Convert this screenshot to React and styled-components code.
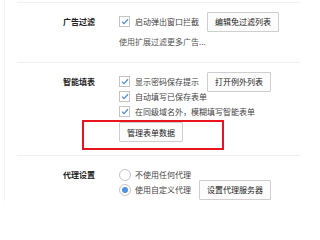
import React from 'react';
import styled, { createGlobalStyle } from 'styled-components';

const GlobalStyle = createGlobalStyle`
  html, body {
    margin: 0;
    padding: 0;
    background: #fff;
  }
  body {
    font-family: "Noto Sans CJK SC", "Noto Sans", sans-serif;
    font-size: 8px;
    color: #444;
  }
`;

const Page = styled.div`
  width: 296px;
  height: 201px;
  margin-left: 4px;
  border-left: 1px solid #f4f4f4;
  overflow: hidden;
  padding-top: 2px;
  box-sizing: border-box;
`;

const Section = styled.section`
  display: grid;
  grid-template-columns: 102px 1fr;
  margin-left: 12px;
  padding: 11px 0 ${props => props.$last ? 0 : 13}px;
  border-top: 1px solid #f1f1f1;
`;

const Label = styled.div`
  text-align: right;
  padding-right: 24px;
  line-height: 15px;
  font-weight: bold;
  color: #222;
`;

const Options = styled.div`
  display: flex;
  flex-direction: column;
`;

const Row = styled.div`
  display: flex;
  align-items: center;
  height: 15px;
  white-space: nowrap;
`;

const Hint = styled.div`
  margin-top: 5px;
  line-height: 15px;
  color: #555;
  white-space: nowrap;
`;

const Box = styled.span`
  width: 9px;
  height: 9px;
  border: 1px solid #c4c4c4;
  background: #fff;
  margin-right: 5px;
  flex-shrink: 0;
  display: flex;
  align-items: center;
  justify-content: center;
`;

const Radio = styled.span`
  width: 10px;
  height: 10px;
  border: 1px solid #c4c4c4;
  border-radius: 50%;
  background: #fff;
  margin-right: 4px;
  flex-shrink: 0;
  display: flex;
  align-items: center;
  justify-content: center;

  &::after {
    content: '';
    width: 6px;
    height: 6px;
    border-radius: 50%;
    background: ${props => props.$on ? '#4f92e3' : 'transparent'};
  }
`;

const Button = styled.button`
  position: relative;
  height: 20px;
  margin-left: ${props => props.$inline ? 8 : 0}px;
  padding: 0 7px;
  border: 1px solid #cfcfcf;
  border-radius: 1px;
  background: #fcfcfc;
  font-family: inherit;
  font-size: 8px;
  color: #222;
  white-space: nowrap;
  flex-shrink: 0;
`;

const ButtonRow = styled.div`
  display: flex;
  margin-top: 3px;
`;

// red annotation frame drawn over the button
const Highlight = styled.span`
  position: absolute;
  left: -38px;
  top: -3px;
  width: 142px;
  height: 30px;
  border: 2px solid #e8151d;
  box-sizing: border-box;
  pointer-events: none;
`;

const Check = () => (
  <Box>
    <svg width="8" height="7" viewBox="0 0 8 7">
      <path d="M1 3.6 L3 5.6 L7 1.2" fill="none" stroke="#4a8fdf" strokeWidth="1.3" />
    </svg>
  </Box>
);

const App = () => (
  <>
    <GlobalStyle />
    <Page>
      <Section>
        <Label>广告过滤</Label>
        <Options>
          <Row>
            <Check />启动弹出窗口拦截
            <Button $inline>编辑免过滤列表</Button>
          </Row>
          <Hint>使用扩展过滤更多广告...</Hint>
        </Options>
      </Section>
      <Section>
        <Label>智能填表</Label>
        <Options>
          <Row>
            <Check />显示密码保存提示
            <Button $inline>打开例外列表</Button>
          </Row>
          <Row>
            <Check />自动填写已保存表单
          </Row>
          <Row>
            <Check />在同级域名外，模糊填写智能表单
          </Row>
          <ButtonRow>
            <Button>
              管理表单数据
              <Highlight />
            </Button>
          </ButtonRow>
        </Options>
      </Section>
      <Section $last>
        <Label>代理设置</Label>
        <Options>
          <Row>
            <Radio />不使用任何代理
          </Row>
          <Row>
            <Radio $on />使用自定义代理
            <Button $inline>设置代理服务器</Button>
          </Row>
        </Options>
      </Section>
    </Page>
  </>
);

export default App;
